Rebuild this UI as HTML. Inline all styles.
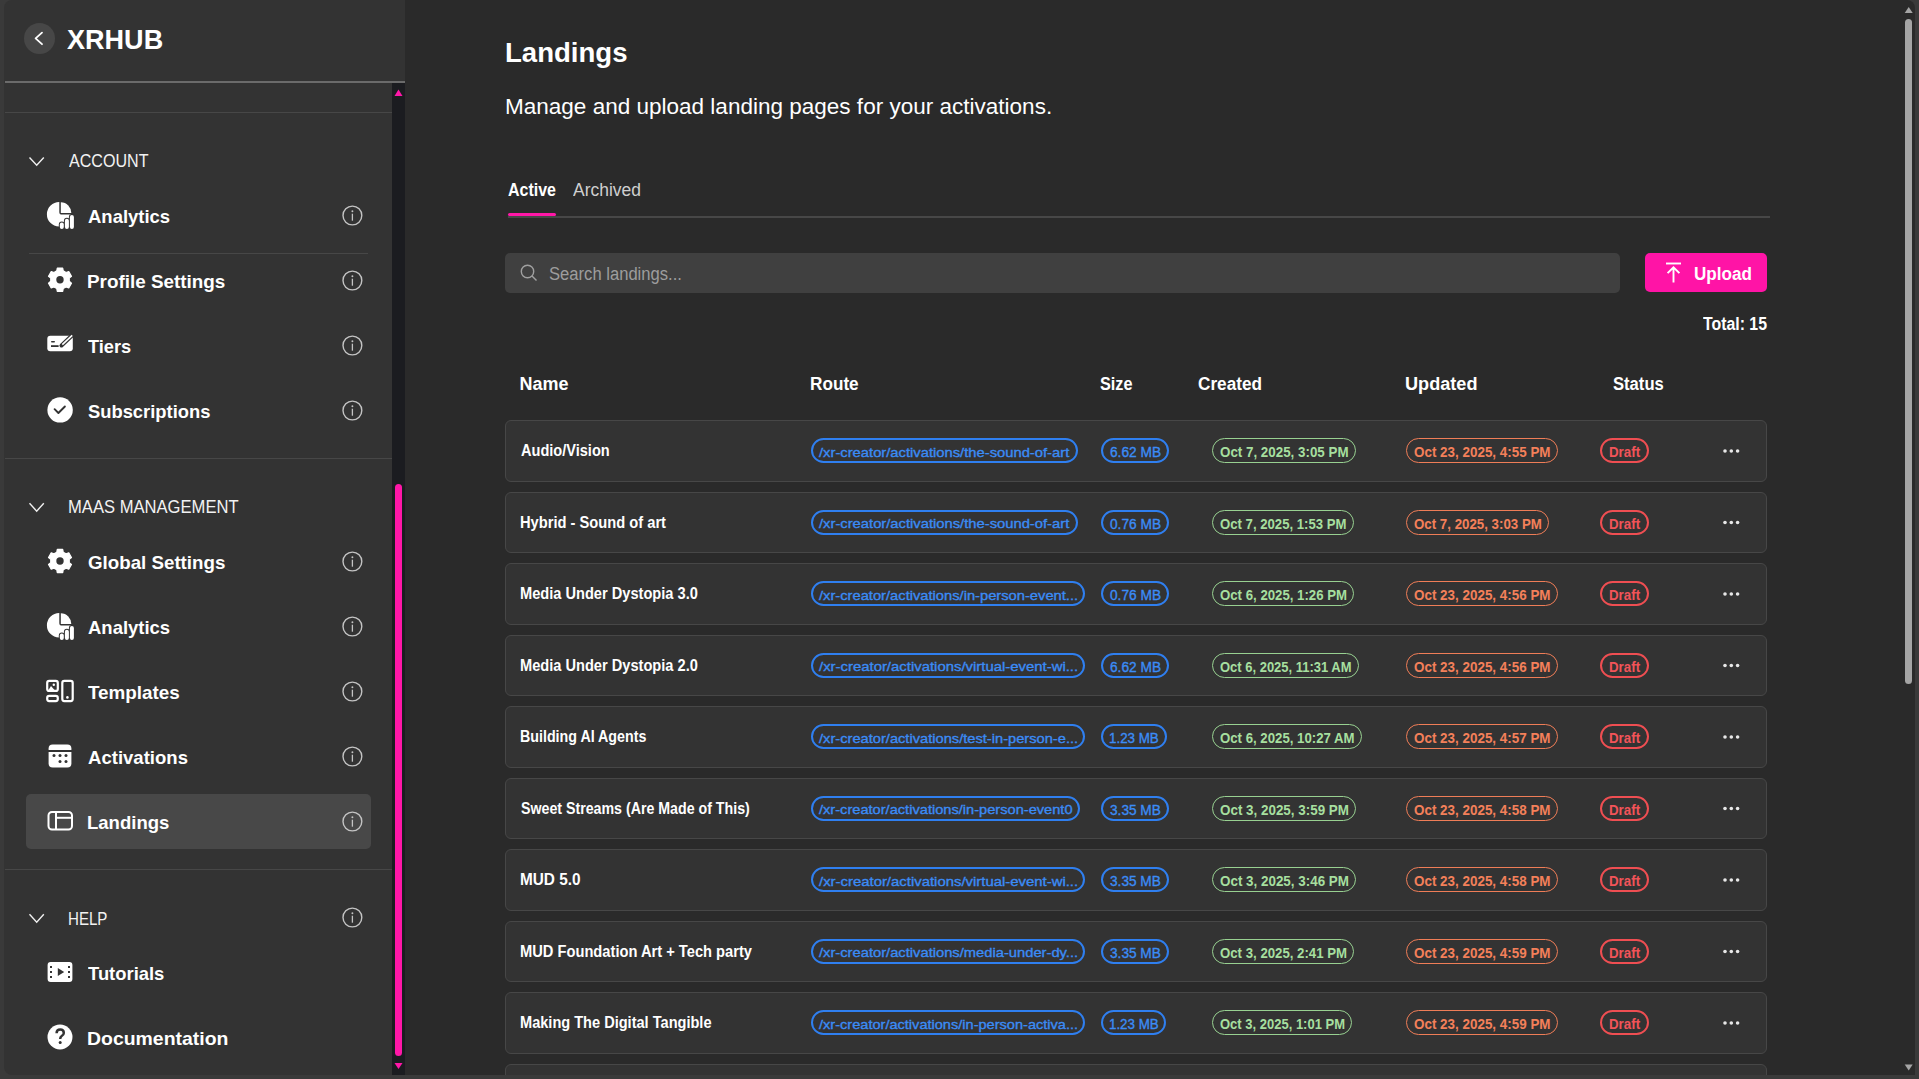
<!DOCTYPE html><html><head><meta charset="utf-8"><style>
html,body{margin:0;padding:0;width:1919px;height:1079px;overflow:hidden;background:#3a3a3a;font-family:"Liberation Sans", sans-serif;}
.a{position:absolute;}
.t{position:absolute;white-space:nowrap;line-height:1;transform-origin:0 0;}
.card{position:absolute;left:505px;width:1262px;height:61.5px;box-sizing:border-box;background:#333333;border:1px solid #474747;border-radius:6px;}
.pill{position:absolute;height:25px;box-sizing:border-box;border-radius:13px;}

</style></head><body>
<div class="a" style="left:4px;top:0;width:401px;height:1075px;background:#333333;border-radius:8px 0 0 8px;"></div>
<div class="a" style="left:405px;top:0;width:1510px;height:1075px;background:#2a2a2a;border-radius:0 8px 0 0;"></div>
<div class="a" style="left:5px;top:81px;width:400px;height:2px;background:#6b6b6b;"></div>
<div class="a" style="left:392px;top:83px;width:13px;height:992px;background:#1b1c20;"></div>
<div class="a" style="left:395px;top:484px;width:7px;height:572px;background:#ff17a8;border-radius:3.5px;"></div>
<div class="a" style="left:5px;top:112px;width:387px;height:1px;background:#474747;"></div>
<div class="a" style="left:5px;top:458px;width:387px;height:1px;background:#474747;"></div>
<div class="a" style="left:5px;top:869px;width:387px;height:1px;background:#474747;"></div>
<div class="a" style="left:29px;top:253px;width:339px;height:1px;background:#474747;"></div>
<div class="a" style="left:26px;top:794px;width:345px;height:55px;background:#484848;border-radius:5px;"></div>
<div class="a" style="left:24px;top:23px;width:31px;height:31px;background:#474747;border-radius:50%;"></div>
<div class="card" style="top:420.0px;"></div>
<div class="card" style="top:491.5px;"></div>
<div class="card" style="top:563.0px;"></div>
<div class="card" style="top:634.5px;"></div>
<div class="card" style="top:706.0px;"></div>
<div class="card" style="top:777.5px;"></div>
<div class="card" style="top:849.0px;"></div>
<div class="card" style="top:920.5px;"></div>
<div class="card" style="top:992.0px;"></div>
<div class="card" style="top:1063.5px;"></div>
<div class="pill" style="left:811px;top:438.0px;width:266.5px;border:2px solid #2f7ff0;"></div>
<div class="pill" style="left:1101px;top:438.0px;width:67.70000000000005px;border:2px solid #2f7ff0;"></div>
<div class="pill" style="left:1212px;top:438.0px;width:143.5px;border:1.5px solid #98d191;"></div>
<div class="pill" style="left:1406px;top:438.0px;width:151.5px;border:1.5px solid #ef7d57;"></div>
<div class="pill" style="left:1600px;top:438.0px;width:49px;border:2px solid #ef4e52;"></div>
<div class="pill" style="left:811px;top:509.5px;width:266.5px;border:2px solid #2f7ff0;"></div>
<div class="pill" style="left:1101px;top:509.5px;width:67.70000000000005px;border:2px solid #2f7ff0;"></div>
<div class="pill" style="left:1212px;top:509.5px;width:141.5px;border:1.5px solid #98d191;"></div>
<div class="pill" style="left:1406px;top:509.5px;width:142.79999999999995px;border:1.5px solid #ef7d57;"></div>
<div class="pill" style="left:1600px;top:509.5px;width:49px;border:2px solid #ef4e52;"></div>
<div class="pill" style="left:811px;top:581.0px;width:274.29999999999995px;border:2px solid #2f7ff0;"></div>
<div class="pill" style="left:1101px;top:581.0px;width:67.70000000000005px;border:2px solid #2f7ff0;"></div>
<div class="pill" style="left:1212px;top:581.0px;width:142px;border:1.5px solid #98d191;"></div>
<div class="pill" style="left:1406px;top:581.0px;width:151.5px;border:1.5px solid #ef7d57;"></div>
<div class="pill" style="left:1600px;top:581.0px;width:49px;border:2px solid #ef4e52;"></div>
<div class="pill" style="left:811px;top:652.5px;width:274.29999999999995px;border:2px solid #2f7ff0;"></div>
<div class="pill" style="left:1101px;top:652.5px;width:67.70000000000005px;border:2px solid #2f7ff0;"></div>
<div class="pill" style="left:1212px;top:652.5px;width:147px;border:1.5px solid #98d191;"></div>
<div class="pill" style="left:1406px;top:652.5px;width:151.5px;border:1.5px solid #ef7d57;"></div>
<div class="pill" style="left:1600px;top:652.5px;width:49px;border:2px solid #ef4e52;"></div>
<div class="pill" style="left:811px;top:724.0px;width:274.29999999999995px;border:2px solid #2f7ff0;"></div>
<div class="pill" style="left:1101px;top:724.0px;width:65.5px;border:2px solid #2f7ff0;"></div>
<div class="pill" style="left:1212px;top:724.0px;width:150px;border:1.5px solid #98d191;"></div>
<div class="pill" style="left:1406px;top:724.0px;width:151.5px;border:1.5px solid #ef7d57;"></div>
<div class="pill" style="left:1600px;top:724.0px;width:49px;border:2px solid #ef4e52;"></div>
<div class="pill" style="left:811px;top:795.5px;width:269px;border:2px solid #2f7ff0;"></div>
<div class="pill" style="left:1101px;top:795.5px;width:67.5px;border:2px solid #2f7ff0;"></div>
<div class="pill" style="left:1212px;top:795.5px;width:143.9000000000001px;border:1.5px solid #98d191;"></div>
<div class="pill" style="left:1406px;top:795.5px;width:151.5px;border:1.5px solid #ef7d57;"></div>
<div class="pill" style="left:1600px;top:795.5px;width:49px;border:2px solid #ef4e52;"></div>
<div class="pill" style="left:811px;top:867.0px;width:274.29999999999995px;border:2px solid #2f7ff0;"></div>
<div class="pill" style="left:1101px;top:867.0px;width:67.5px;border:2px solid #2f7ff0;"></div>
<div class="pill" style="left:1212px;top:867.0px;width:143.9000000000001px;border:1.5px solid #98d191;"></div>
<div class="pill" style="left:1406px;top:867.0px;width:151.5px;border:1.5px solid #ef7d57;"></div>
<div class="pill" style="left:1600px;top:867.0px;width:49px;border:2px solid #ef4e52;"></div>
<div class="pill" style="left:811px;top:938.5px;width:274.29999999999995px;border:2px solid #2f7ff0;"></div>
<div class="pill" style="left:1101px;top:938.5px;width:67.5px;border:2px solid #2f7ff0;"></div>
<div class="pill" style="left:1212px;top:938.5px;width:142px;border:1.5px solid #98d191;"></div>
<div class="pill" style="left:1406px;top:938.5px;width:151.5px;border:1.5px solid #ef7d57;"></div>
<div class="pill" style="left:1600px;top:938.5px;width:49px;border:2px solid #ef4e52;"></div>
<div class="pill" style="left:811px;top:1010.0px;width:274.29999999999995px;border:2px solid #2f7ff0;"></div>
<div class="pill" style="left:1101px;top:1010.0px;width:65.40000000000009px;border:2px solid #2f7ff0;"></div>
<div class="pill" style="left:1212px;top:1010.0px;width:140px;border:1.5px solid #98d191;"></div>
<div class="pill" style="left:1406px;top:1010.0px;width:151.5px;border:1.5px solid #ef7d57;"></div>
<div class="pill" style="left:1600px;top:1010.0px;width:49px;border:2px solid #ef4e52;"></div>
<div class="a" style="left:505px;top:253px;width:1115px;height:40px;background:#404040;border-radius:5px;"></div>
<div class="a" style="left:1645px;top:253px;width:122px;height:39px;background:#ff14a6;border-radius:5px;"></div>
<div class="a" style="left:508px;top:216px;width:1262px;height:2px;background:#474747;"></div>
<div class="a" style="left:508px;top:213px;width:48px;height:3px;background:#ff17a8;border-radius:1.5px;"></div>
<div class="a" style="left:1905px;top:19px;width:7px;height:665px;background:#a5a5a5;border-radius:3.5px;"></div>
<div class="t" style="left:67.0px;top:26.30px;font-size:28px;font-weight:700;color:#fff;transform:scaleX(0.9661);">XRHUB</div>
<div class="t" style="left:69.0px;top:152.36px;font-size:18px;font-weight:400;color:#f2f2f2;transform:scaleX(0.8932);">ACCOUNT</div>
<div class="t" style="left:68.3778px;top:498.46px;font-size:18px;font-weight:400;color:#f2f2f2;transform:scaleX(0.9222);">MAAS MANAGEMENT</div>
<div class="t" style="left:68.46119999999999px;top:909.56px;font-size:18px;font-weight:400;color:#f2f2f2;transform:scaleX(0.8388);">HELP</div>
<div class="t" style="left:88.0px;top:206.72px;font-size:19px;font-weight:700;color:#fff;transform:scaleX(0.9724);">Analytics</div>
<div class="t" style="left:87.0079px;top:271.82px;font-size:19px;font-weight:700;color:#fff;transform:scaleX(0.9921);">Profile Settings</div>
<div class="t" style="left:88.0px;top:336.82px;font-size:19px;font-weight:700;color:#fff;transform:scaleX(0.9573);">Tiers</div>
<div class="t" style="left:88.0px;top:401.82px;font-size:19px;font-weight:700;color:#fff;transform:scaleX(0.9658);">Subscriptions</div>
<div class="t" style="left:88.0px;top:553.22px;font-size:19px;font-weight:700;color:#fff;transform:scaleX(0.9857);">Global Settings</div>
<div class="t" style="left:88.0px;top:618.12px;font-size:19px;font-weight:700;color:#fff;transform:scaleX(0.9724);">Analytics</div>
<div class="t" style="left:88.0px;top:682.92px;font-size:19px;font-weight:700;color:#fff;transform:scaleX(0.9913);">Templates</div>
<div class="t" style="left:88.0px;top:747.92px;font-size:19px;font-weight:700;color:#fff;transform:scaleX(0.976);">Activations</div>
<div class="t" style="left:87.025px;top:812.72px;font-size:19px;font-weight:700;color:#fff;transform:scaleX(0.975);">Landings</div>
<div class="t" style="left:88.0px;top:963.52px;font-size:19px;font-weight:700;color:#fff;transform:scaleX(0.9686);">Tutorials</div>
<div class="t" style="left:86.97710000000001px;top:1028.82px;font-size:19px;font-weight:700;color:#fff;transform:scaleX(1.0229);">Documentation</div>
<div class="t" style="left:505.0152px;top:39.30px;font-size:28px;font-weight:700;color:#fff;transform:scaleX(0.9848);">Landings</div>
<div class="t" style="left:504.9763px;top:96.08px;font-size:22px;font-weight:400;color:#fff;transform:scaleX(1.0237);">Manage and upload landing pages for your activations.</div>
<div class="t" style="left:508.0px;top:181.36px;font-size:18px;font-weight:700;color:#fff;transform:scaleX(0.8886);">Active</div>
<div class="t" style="left:573.0px;top:181.36px;font-size:18px;font-weight:400;color:#cfcfcf;transform:scaleX(0.9707);">Archived</div>
<div class="t" style="left:548.8px;top:264.56px;font-size:18px;font-weight:400;color:#9d9d9d;transform:scaleX(0.9225);">Search landings...</div>
<div class="t" style="left:1693.5509px;top:264.76px;font-size:18px;font-weight:700;color:#fff;transform:scaleX(0.9491);">Upload</div>
<div class="t" style="left:1703.0px;top:314.76px;font-size:18px;font-weight:700;color:#fff;transform:scaleX(0.8807);">Total: 15</div>
<div class="t" style="left:519.5003px;top:374.76px;font-size:18px;font-weight:700;color:#fff;">Name</div>
<div class="t" style="left:809.5457px;top:374.76px;font-size:18px;font-weight:700;color:#fff;transform:scaleX(0.9543);">Route</div>
<div class="t" style="left:1100.0px;top:374.76px;font-size:18px;font-weight:700;color:#fff;transform:scaleX(0.9026);">Size</div>
<div class="t" style="left:1197.5px;top:374.76px;font-size:18px;font-weight:700;color:#fff;transform:scaleX(0.9541);">Created</div>
<div class="t" style="left:1404.7929px;top:374.76px;font-size:18px;font-weight:700;color:#fff;transform:scaleX(1.0071);">Updated</div>
<div class="t" style="left:1612.5px;top:374.76px;font-size:18px;font-weight:700;color:#fff;transform:scaleX(0.9236);">Status</div>
<div class="t" style="left:521.0px;top:443.46px;font-size:16px;font-weight:700;color:#fff;transform:scaleX(0.9099);">Audio/Vision</div>
<div class="t" style="left:520.0823px;top:514.96px;font-size:16px;font-weight:700;color:#fff;transform:scaleX(0.9177);">Hybrid - Sound of art</div>
<div class="t" style="left:520.0868px;top:586.46px;font-size:16px;font-weight:700;color:#fff;transform:scaleX(0.9132);">Media Under Dystopia 3.0</div>
<div class="t" style="left:520.0868px;top:657.96px;font-size:16px;font-weight:700;color:#fff;transform:scaleX(0.9132);">Media Under Dystopia 2.0</div>
<div class="t" style="left:520.1097px;top:729.46px;font-size:16px;font-weight:700;color:#fff;transform:scaleX(0.8903);">Building AI Agents</div>
<div class="t" style="left:521.0px;top:800.96px;font-size:16px;font-weight:700;color:#fff;transform:scaleX(0.8873);">Sweet Streams (Are Made of This)</div>
<div class="t" style="left:520.0406px;top:872.46px;font-size:16px;font-weight:700;color:#fff;transform:scaleX(0.9594);">MUD 5.0</div>
<div class="t" style="left:520.0827px;top:943.96px;font-size:16px;font-weight:700;color:#fff;transform:scaleX(0.9173);">MUD Foundation Art + Tech party</div>
<div class="t" style="left:520.0897px;top:1015.46px;font-size:16px;font-weight:700;color:#fff;transform:scaleX(0.9103);">Making The Digital Tangible</div>
<div class="t" style="left:819.0px;top:445.87px;font-size:13.5px;font-weight:400;color:#3b8cf6;transform:scaleX(1.0935);-webkit-text-stroke:0.35px #3b8cf6;">/xr-creator/activations/the-sound-of-art</div>
<div class="t" style="left:1109.5px;top:445.45px;font-size:14px;font-weight:400;color:#3b8cf6;transform:scaleX(0.9788);-webkit-text-stroke:0.35px #3b8cf6;">6.62 MB</div>
<div class="t" style="left:1219.8px;top:445.45px;font-size:14px;font-weight:700;color:#a6df9f;transform:scaleX(0.9547);">Oct 7, 2025, 3:05 PM</div>
<div class="t" style="left:1413.8px;top:445.45px;font-size:14px;font-weight:700;color:#f4805a;transform:scaleX(0.9587);">Oct 23, 2025, 4:55 PM</div>
<div class="t" style="left:1608.8px;top:445.45px;font-size:14px;font-weight:700;color:#f25459;transform:scaleX(0.9513);">Draft</div>
<div class="t" style="left:819.0px;top:517.37px;font-size:13.5px;font-weight:400;color:#3b8cf6;transform:scaleX(1.0935);-webkit-text-stroke:0.35px #3b8cf6;">/xr-creator/activations/the-sound-of-art</div>
<div class="t" style="left:1109.5px;top:516.95px;font-size:14px;font-weight:400;color:#3b8cf6;transform:scaleX(0.9788);-webkit-text-stroke:0.35px #3b8cf6;">0.76 MB</div>
<div class="t" style="left:1219.8px;top:516.95px;font-size:14px;font-weight:700;color:#a6df9f;transform:scaleX(0.9398);">Oct 7, 2025, 1:53 PM</div>
<div class="t" style="left:1413.8px;top:516.95px;font-size:14px;font-weight:700;color:#f4805a;transform:scaleX(0.9495);">Oct 7, 2025, 3:03 PM</div>
<div class="t" style="left:1608.8px;top:516.95px;font-size:14px;font-weight:700;color:#f25459;transform:scaleX(0.9513);">Draft</div>
<div class="t" style="left:819.0px;top:588.87px;font-size:13.5px;font-weight:400;color:#3b8cf6;transform:scaleX(1.0894);-webkit-text-stroke:0.35px #3b8cf6;">/xr-creator/activations/in-person-event...</div>
<div class="t" style="left:1109.5px;top:588.45px;font-size:14px;font-weight:400;color:#3b8cf6;transform:scaleX(0.9788);-webkit-text-stroke:0.35px #3b8cf6;">0.76 MB</div>
<div class="t" style="left:1219.8px;top:588.45px;font-size:14px;font-weight:700;color:#a6df9f;transform:scaleX(0.9435);">Oct 6, 2025, 1:26 PM</div>
<div class="t" style="left:1413.8px;top:588.45px;font-size:14px;font-weight:700;color:#f4805a;transform:scaleX(0.9587);">Oct 23, 2025, 4:56 PM</div>
<div class="t" style="left:1608.8px;top:588.45px;font-size:14px;font-weight:700;color:#f25459;transform:scaleX(0.9513);">Draft</div>
<div class="t" style="left:819.0px;top:660.37px;font-size:13.5px;font-weight:400;color:#3b8cf6;transform:scaleX(1.1035);-webkit-text-stroke:0.35px #3b8cf6;">/xr-creator/activations/virtual-event-wi...</div>
<div class="t" style="left:1109.5px;top:659.95px;font-size:14px;font-weight:400;color:#3b8cf6;transform:scaleX(0.9788);-webkit-text-stroke:0.35px #3b8cf6;">6.62 MB</div>
<div class="t" style="left:1219.8px;top:659.95px;font-size:14px;font-weight:700;color:#a6df9f;transform:scaleX(0.927);">Oct 6, 2025, 11:31 AM</div>
<div class="t" style="left:1413.8px;top:659.95px;font-size:14px;font-weight:700;color:#f4805a;transform:scaleX(0.9587);">Oct 23, 2025, 4:56 PM</div>
<div class="t" style="left:1608.8px;top:659.95px;font-size:14px;font-weight:700;color:#f25459;transform:scaleX(0.9513);">Draft</div>
<div class="t" style="left:819.0px;top:731.87px;font-size:13.5px;font-weight:400;color:#3b8cf6;transform:scaleX(1.0861);-webkit-text-stroke:0.35px #3b8cf6;">/xr-creator/activations/test-in-person-e...</div>
<div class="t" style="left:1108.5453px;top:731.45px;font-size:14px;font-weight:400;color:#3b8cf6;transform:scaleX(0.9547);-webkit-text-stroke:0.35px #3b8cf6;">1.23 MB</div>
<div class="t" style="left:1219.8px;top:731.45px;font-size:14px;font-weight:700;color:#a6df9f;transform:scaleX(0.943);">Oct 6, 2025, 10:27 AM</div>
<div class="t" style="left:1413.8px;top:731.45px;font-size:14px;font-weight:700;color:#f4805a;transform:scaleX(0.9587);">Oct 23, 2025, 4:57 PM</div>
<div class="t" style="left:1608.8px;top:731.45px;font-size:14px;font-weight:700;color:#f25459;transform:scaleX(0.9513);">Draft</div>
<div class="t" style="left:819.0px;top:803.37px;font-size:13.5px;font-weight:400;color:#3b8cf6;transform:scaleX(1.0831);-webkit-text-stroke:0.35px #3b8cf6;">/xr-creator/activations/in-person-event0</div>
<div class="t" style="left:1109.5px;top:802.95px;font-size:14px;font-weight:400;color:#3b8cf6;transform:scaleX(0.9749);-webkit-text-stroke:0.35px #3b8cf6;">3.35 MB</div>
<div class="t" style="left:1219.8px;top:802.95px;font-size:14px;font-weight:700;color:#a6df9f;transform:scaleX(0.9577);">Oct 3, 2025, 3:59 PM</div>
<div class="t" style="left:1413.8px;top:802.95px;font-size:14px;font-weight:700;color:#f4805a;transform:scaleX(0.9587);">Oct 23, 2025, 4:58 PM</div>
<div class="t" style="left:1608.8px;top:802.95px;font-size:14px;font-weight:700;color:#f25459;transform:scaleX(0.9513);">Draft</div>
<div class="t" style="left:819.0px;top:874.87px;font-size:13.5px;font-weight:400;color:#3b8cf6;transform:scaleX(1.1035);-webkit-text-stroke:0.35px #3b8cf6;">/xr-creator/activations/virtual-event-wi...</div>
<div class="t" style="left:1109.5px;top:874.45px;font-size:14px;font-weight:400;color:#3b8cf6;transform:scaleX(0.9749);-webkit-text-stroke:0.35px #3b8cf6;">3.35 MB</div>
<div class="t" style="left:1219.8px;top:874.45px;font-size:14px;font-weight:700;color:#a6df9f;transform:scaleX(0.9577);">Oct 3, 2025, 3:46 PM</div>
<div class="t" style="left:1413.8px;top:874.45px;font-size:14px;font-weight:700;color:#f4805a;transform:scaleX(0.9587);">Oct 23, 2025, 4:58 PM</div>
<div class="t" style="left:1608.8px;top:874.45px;font-size:14px;font-weight:700;color:#f25459;transform:scaleX(0.9513);">Draft</div>
<div class="t" style="left:819.0px;top:946.37px;font-size:13.5px;font-weight:400;color:#3b8cf6;transform:scaleX(1.0906);-webkit-text-stroke:0.35px #3b8cf6;">/xr-creator/activations/media-under-dy...</div>
<div class="t" style="left:1109.5px;top:945.95px;font-size:14px;font-weight:400;color:#3b8cf6;transform:scaleX(0.9749);-webkit-text-stroke:0.35px #3b8cf6;">3.35 MB</div>
<div class="t" style="left:1219.8px;top:945.95px;font-size:14px;font-weight:700;color:#a6df9f;transform:scaleX(0.9435);">Oct 3, 2025, 2:41 PM</div>
<div class="t" style="left:1413.8px;top:945.95px;font-size:14px;font-weight:700;color:#f4805a;transform:scaleX(0.9587);">Oct 23, 2025, 4:59 PM</div>
<div class="t" style="left:1608.8px;top:945.95px;font-size:14px;font-weight:700;color:#f25459;transform:scaleX(0.9513);">Draft</div>
<div class="t" style="left:819.0px;top:1017.87px;font-size:13.5px;font-weight:400;color:#3b8cf6;transform:scaleX(1.0792);-webkit-text-stroke:0.35px #3b8cf6;">/xr-creator/activations/in-person-activa...</div>
<div class="t" style="left:1108.5472px;top:1017.45px;font-size:14px;font-weight:400;color:#3b8cf6;transform:scaleX(0.9528);-webkit-text-stroke:0.35px #3b8cf6;">1.23 MB</div>
<div class="t" style="left:1219.8px;top:1017.45px;font-size:14px;font-weight:700;color:#a6df9f;transform:scaleX(0.9286);">Oct 3, 2025, 1:01 PM</div>
<div class="t" style="left:1413.8px;top:1017.45px;font-size:14px;font-weight:700;color:#f4805a;transform:scaleX(0.9587);">Oct 23, 2025, 4:59 PM</div>
<div class="t" style="left:1608.8px;top:1017.45px;font-size:14px;font-weight:700;color:#f25459;transform:scaleX(0.9513);">Draft</div>
<svg class="a" style="left:0;top:0" width="1919" height="1079" viewBox="0 0 1919 1079"><path d="M42 32.6 L35.6 38.4 L42 44.2" fill="none" stroke="#fff" stroke-width="1.8" stroke-linecap="round" stroke-linejoin="round"/><path d="M29.5 157.5 L36.7 165.3 L43.8 157.5" fill="none" stroke="#f0f0f0" stroke-width="1.4"/><path d="M29.5 503.3 L36.7 511.1 L43.8 503.3" fill="none" stroke="#f0f0f0" stroke-width="1.4"/><path d="M29.5 914.3 L36.7 922.0999999999999 L43.8 914.3" fill="none" stroke="#f0f0f0" stroke-width="1.4"/><circle cx="352.4" cy="215.5" r="9.4" fill="none" stroke="#c4c4c4" stroke-width="1.4"/><line x1="352.4" y1="213.7" x2="352.4" y2="220.7" stroke="#c4c4c4" stroke-width="1.3"/><circle cx="352.4" cy="211.2" r="0.95" fill="#c4c4c4"/><circle cx="352.4" cy="280.5" r="9.4" fill="none" stroke="#c4c4c4" stroke-width="1.4"/><line x1="352.4" y1="278.7" x2="352.4" y2="285.7" stroke="#c4c4c4" stroke-width="1.3"/><circle cx="352.4" cy="276.2" r="0.95" fill="#c4c4c4"/><circle cx="352.4" cy="345.5" r="9.4" fill="none" stroke="#c4c4c4" stroke-width="1.4"/><line x1="352.4" y1="343.7" x2="352.4" y2="350.7" stroke="#c4c4c4" stroke-width="1.3"/><circle cx="352.4" cy="341.2" r="0.95" fill="#c4c4c4"/><circle cx="352.4" cy="410.5" r="9.4" fill="none" stroke="#c4c4c4" stroke-width="1.4"/><line x1="352.4" y1="408.7" x2="352.4" y2="415.7" stroke="#c4c4c4" stroke-width="1.3"/><circle cx="352.4" cy="406.2" r="0.95" fill="#c4c4c4"/><circle cx="352.4" cy="561.5" r="9.4" fill="none" stroke="#c4c4c4" stroke-width="1.4"/><line x1="352.4" y1="559.7" x2="352.4" y2="566.7" stroke="#c4c4c4" stroke-width="1.3"/><circle cx="352.4" cy="557.2" r="0.95" fill="#c4c4c4"/><circle cx="352.4" cy="626.5" r="9.4" fill="none" stroke="#c4c4c4" stroke-width="1.4"/><line x1="352.4" y1="624.7" x2="352.4" y2="631.7" stroke="#c4c4c4" stroke-width="1.3"/><circle cx="352.4" cy="622.2" r="0.95" fill="#c4c4c4"/><circle cx="352.4" cy="691.5" r="9.4" fill="none" stroke="#c4c4c4" stroke-width="1.4"/><line x1="352.4" y1="689.7" x2="352.4" y2="696.7" stroke="#c4c4c4" stroke-width="1.3"/><circle cx="352.4" cy="687.2" r="0.95" fill="#c4c4c4"/><circle cx="352.4" cy="756.5" r="9.4" fill="none" stroke="#c4c4c4" stroke-width="1.4"/><line x1="352.4" y1="754.7" x2="352.4" y2="761.7" stroke="#c4c4c4" stroke-width="1.3"/><circle cx="352.4" cy="752.2" r="0.95" fill="#c4c4c4"/><circle cx="352.4" cy="821.5" r="9.4" fill="none" stroke="#c4c4c4" stroke-width="1.4"/><line x1="352.4" y1="819.7" x2="352.4" y2="826.7" stroke="#c4c4c4" stroke-width="1.3"/><circle cx="352.4" cy="817.2" r="0.95" fill="#c4c4c4"/><circle cx="352.4" cy="917.5" r="9.4" fill="none" stroke="#c4c4c4" stroke-width="1.4"/><line x1="352.4" y1="915.7" x2="352.4" y2="922.7" stroke="#c4c4c4" stroke-width="1.3"/><circle cx="352.4" cy="913.2" r="0.95" fill="#c4c4c4"/><g transform="translate(0 0)"><path d="M59.3 202 A12.3 12.3 0 1 0 71.5 214.6 L62 214.6 Q59.3 214.6 59.3 212 Z" fill="#fff"/><path d="M60.8 202.2 A10.6 10.6 0 0 1 71.3 212.9 L60.8 212.9 Z" fill="#fff"/><rect x="58.8" y="221.4" width="6" height="8.5" rx="3" fill="#333333"/><rect x="63.900000000000006" y="217.7" width="6" height="12.200000000000017" rx="3" fill="#333333"/><rect x="68.9" y="214.0" width="6" height="15.900000000000006" rx="3" fill="#333333"/><rect x="59.8" y="222.4" width="4" height="6.5" rx="2" fill="#fff"/><rect x="64.9" y="218.7" width="4" height="10.200000000000017" rx="2" fill="#fff"/><rect x="69.9" y="215.0" width="4" height="13.900000000000006" rx="2" fill="#fff"/></g><path d="M56.79 270.87 L57.30 268.01 L62.70 268.01 L63.21 270.87 L66.04 272.50 L68.78 271.52 L71.48 276.19 L69.26 278.07 L69.26 281.33 L71.48 283.21 L68.78 287.88 L66.04 286.90 L63.21 288.53 L62.70 291.39 L57.30 291.39 L56.79 288.53 L53.96 286.90 L51.22 287.88 L48.52 283.21 L50.74 281.33 L50.74 278.07 L48.52 276.19 L51.22 271.52 L53.96 272.50 Z" fill="#fff" stroke="#fff" stroke-width="1.2" stroke-linejoin="round"/><circle cx="60" cy="279.7" r="3.7" fill="#333333"/><rect x="47.3" y="335.8" width="25.5" height="15.5" rx="3" fill="#fff"/><rect x="51" y="341" width="4" height="1.6" rx="0.8" fill="#333333"/><rect x="51" y="345.2" width="7.6" height="1.8" fill="#333333"/><path d="M61.5 345.5 L72.5 335" stroke="#333333" stroke-width="4" stroke-linecap="round"/><path d="M62.3 344.7 L72.2 335.3" stroke="#fff" stroke-width="1.6"/><circle cx="60.1" cy="409.9" r="12.7" fill="#fff"/><path d="M54.6 409.2 L58.4 413 L64.9 406.5" fill="none" stroke="#333333" stroke-width="1.9" stroke-linecap="round" stroke-linejoin="round"/><path d="M56.79 552.17 L57.30 549.31 L62.70 549.31 L63.21 552.17 L66.04 553.80 L68.78 552.82 L71.48 557.49 L69.26 559.37 L69.26 562.63 L71.48 564.51 L68.78 569.18 L66.04 568.20 L63.21 569.83 L62.70 572.69 L57.30 572.69 L56.79 569.83 L53.96 568.20 L51.22 569.18 L48.52 564.51 L50.74 562.63 L50.74 559.37 L48.52 557.49 L51.22 552.82 L53.96 553.80 Z" fill="#fff" stroke="#fff" stroke-width="1.2" stroke-linejoin="round"/><circle cx="60" cy="561" r="3.7" fill="#333333"/><g transform="translate(0 411)"><path d="M59.3 202 A12.3 12.3 0 1 0 71.5 214.6 L62 214.6 Q59.3 214.6 59.3 212 Z" fill="#fff"/><path d="M60.8 202.2 A10.6 10.6 0 0 1 71.3 212.9 L60.8 212.9 Z" fill="#fff"/><rect x="58.8" y="221.4" width="6" height="8.5" rx="3" fill="#333333"/><rect x="63.900000000000006" y="217.7" width="6" height="12.200000000000017" rx="3" fill="#333333"/><rect x="68.9" y="214.0" width="6" height="15.900000000000006" rx="3" fill="#333333"/><rect x="59.8" y="222.4" width="4" height="6.5" rx="2" fill="#fff"/><rect x="64.9" y="218.7" width="4" height="10.200000000000017" rx="2" fill="#fff"/><rect x="69.9" y="215.0" width="4" height="13.900000000000006" rx="2" fill="#fff"/></g><rect x="47.2" y="680.9" width="10.6" height="10" rx="2" fill="none" stroke="#fff" stroke-width="2.2"/><path d="M48.5 690 L51 686 L54.5 690 Z" fill="#fff"/><circle cx="53.8" cy="684.8" r="1.2" fill="#fff"/><rect x="47.2" y="695.9" width="10.6" height="5.2" rx="2" fill="none" stroke="#fff" stroke-width="2.2"/><rect x="62.3" y="680.9" width="10.4" height="20.2" rx="2" fill="none" stroke="#fff" stroke-width="2.2"/><circle cx="67.4" cy="697.4" r="1.3" fill="#fff"/><path d="M48.6 750 L48.6 748.6 Q48.6 744.6 52.6 744.6 L67.4 744.6 Q71.4 744.6 71.4 748.6 L71.4 750 Z" fill="#fff"/><path d="M48.6 752 L71.4 752 L71.4 763.6 Q71.4 767.6 67.4 767.6 L52.6 767.6 Q48.6 767.6 48.6 763.6 Z" fill="#fff"/><circle cx="54" cy="755.6" r="1.5" fill="#333333"/><circle cx="60" cy="755.6" r="1.5" fill="#333333"/><circle cx="66" cy="755.6" r="1.5" fill="#333333"/><circle cx="60" cy="761.4" r="1.5" fill="#333333"/><circle cx="66" cy="761.4" r="1.5" fill="#333333"/><rect x="48.5" y="812" width="23.5" height="17.5" rx="3.5" fill="none" stroke="#fff" stroke-width="2"/><line x1="56" y1="812" x2="56" y2="829.5" stroke="#fff" stroke-width="2"/><line x1="56" y1="817.8" x2="72" y2="817.8" stroke="#fff" stroke-width="2"/><rect x="47.6" y="962" width="24.8" height="20" rx="3" fill="#fff"/><rect x="50" y="966" width="2" height="2" fill="#333333"/><rect x="68" y="966" width="2" height="2" fill="#333333"/><rect x="50" y="971" width="2" height="2" fill="#333333"/><rect x="68" y="971" width="2" height="2" fill="#333333"/><rect x="50" y="976" width="2" height="2" fill="#333333"/><rect x="68" y="976" width="2" height="2" fill="#333333"/><path d="M57.8 968 L64.2 972 L57.8 976 Z" fill="#333333"/><circle cx="60" cy="1037" r="12.5" fill="#fff"/><path d="M56.6 1033.3 Q56.6 1029.6 60.2 1029.6 Q63.8 1029.6 63.8 1033 Q63.8 1035 61.5 1036.2 Q60.2 1037 60.2 1039" fill="none" stroke="#333333" stroke-width="2.5"/><circle cx="60.2" cy="1042.6" r="1.5" fill="#333333"/><path d="M398.5 89.6 L402.5 96 L394.5 96 Z" fill="#ff17a8"/><path d="M394.5 1063 L402.5 1063 L398.5 1069 Z" fill="#ff17a8"/><path d="M1908.7 7 L1912.7 13 L1904.7 13 Z" fill="#a5a5a5"/><path d="M1904.7 1064.5 L1912.7 1064.5 L1908.7 1070.5 Z" fill="#a5a5a5"/><circle cx="527.5" cy="271.5" r="6.2" fill="none" stroke="#a0a0a0" stroke-width="1.4"/><line x1="532" y1="276" x2="536.5" y2="280.5" stroke="#a0a0a0" stroke-width="1.4"/><line x1="1666" y1="263.5" x2="1681" y2="263.5" stroke="#fff" stroke-width="1.9"/><path d="M1673.5 282.5 L1673.5 267.5 M1667.6 273.2 L1673.5 267.3 L1679.4 273.2" fill="none" stroke="#fff" stroke-width="1.9"/><circle cx="1725" cy="451.0" r="1.8" fill="#e8e8e8"/><circle cx="1731.3" cy="451.0" r="1.8" fill="#e8e8e8"/><circle cx="1737.6" cy="451.0" r="1.8" fill="#e8e8e8"/><circle cx="1725" cy="522.5" r="1.8" fill="#e8e8e8"/><circle cx="1731.3" cy="522.5" r="1.8" fill="#e8e8e8"/><circle cx="1737.6" cy="522.5" r="1.8" fill="#e8e8e8"/><circle cx="1725" cy="594.0" r="1.8" fill="#e8e8e8"/><circle cx="1731.3" cy="594.0" r="1.8" fill="#e8e8e8"/><circle cx="1737.6" cy="594.0" r="1.8" fill="#e8e8e8"/><circle cx="1725" cy="665.5" r="1.8" fill="#e8e8e8"/><circle cx="1731.3" cy="665.5" r="1.8" fill="#e8e8e8"/><circle cx="1737.6" cy="665.5" r="1.8" fill="#e8e8e8"/><circle cx="1725" cy="737.0" r="1.8" fill="#e8e8e8"/><circle cx="1731.3" cy="737.0" r="1.8" fill="#e8e8e8"/><circle cx="1737.6" cy="737.0" r="1.8" fill="#e8e8e8"/><circle cx="1725" cy="808.5" r="1.8" fill="#e8e8e8"/><circle cx="1731.3" cy="808.5" r="1.8" fill="#e8e8e8"/><circle cx="1737.6" cy="808.5" r="1.8" fill="#e8e8e8"/><circle cx="1725" cy="880.0" r="1.8" fill="#e8e8e8"/><circle cx="1731.3" cy="880.0" r="1.8" fill="#e8e8e8"/><circle cx="1737.6" cy="880.0" r="1.8" fill="#e8e8e8"/><circle cx="1725" cy="951.5" r="1.8" fill="#e8e8e8"/><circle cx="1731.3" cy="951.5" r="1.8" fill="#e8e8e8"/><circle cx="1737.6" cy="951.5" r="1.8" fill="#e8e8e8"/><circle cx="1725" cy="1023.0" r="1.8" fill="#e8e8e8"/><circle cx="1731.3" cy="1023.0" r="1.8" fill="#e8e8e8"/><circle cx="1737.6" cy="1023.0" r="1.8" fill="#e8e8e8"/></svg>
<div class="a" style="left:0;top:1075px;width:1919px;height:4px;background:#3a3a3a;"></div>
</body></html>
